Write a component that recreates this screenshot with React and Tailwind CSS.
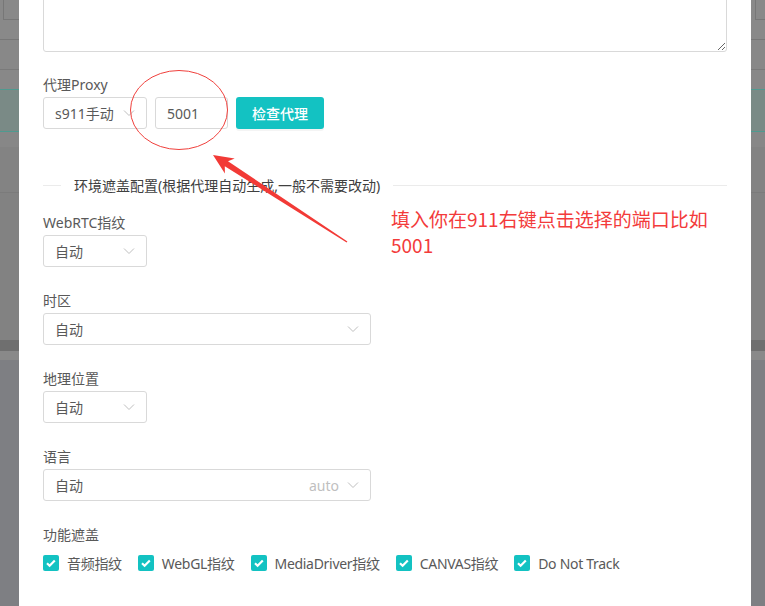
import React from 'react';

const font = { fontFamily: '"Noto Sans", "Noto Sans CJK SC", sans-serif' };

const Chevron = () => (
  <svg width="12" height="8" viewBox="0 0 12 8" className="shrink-0">
    <path d="M1 1.5l5 5 5-5" fill="none" stroke="#bfbfbf" strokeWidth="1" />
  </svg>
);

const Select = ({ value, width, hint }) => (
  <div
    className={`flex items-center h-[32px] border border-[#d9d9d9] rounded-[3px] bg-white pl-[11px] pr-[11px] text-[14px] text-[#595959] ${width}`}
  >
    <span className="flex-1 truncate">{value}</span>
    {hint && <span className="text-[#bfbfbf] mr-[8px]">{hint}</span>}
    <Chevron />
  </div>
);

const Field = ({ label, children, last }) => (
  <div className={last ? '' : 'mb-[23px]'}>
    <div className="h-[22px] leading-[22px] mb-[1px] text-[14px] text-[#595959]">{label}</div>
    {children}
  </div>
);

const Check = ({ label }) => (
  <label className="flex items-center mr-[8px]">
    <span className="w-[16px] h-[16px] rounded-[2px] bg-[#13c2c2] flex items-center justify-center">
      <svg width="16" height="16" viewBox="0 0 16 16">
        <path d="M4 8.2l2.6 2.5 5.2-5.2" fill="none" stroke="#fff" strokeWidth="2.2" />
      </svg>
    </span>
    <span className="px-[8px] text-[14px] text-[#595959] tracking-[-0.3px]">{label}</span>
  </label>
);

const Strip = ({ inset, width }) => (
  <div className={`flex flex-col h-full ${width}`}>
    <div className="h-[40px] bg-[#898989] border-b border-[#777]">
      <div className={`h-[20px] border-l border-b border-[#777] ${inset}`} />
    </div>
    <div className="h-[30px] bg-[#888] border-b border-[#7a7a7a]" />
    <div className="h-[19px] bg-[#888]" />
    <div className="h-[43px] bg-[#7a8a86] border-y border-[#4f9a90]" />
    <div className="h-[15px] bg-[#878787]" />
    <div className="h-[46px] bg-[#838383] border-b border-[#7b7b7b]" />
    <div className="h-[147px] bg-[#828282]" />
    <div className="h-[11px] bg-[#6f6f6f]" />
    <div className="h-[9px] bg-[#898989]" />
    <div className="flex-1 bg-[#7e7f83]" />
  </div>
);

const App = () => {
  const checks = ['音频指纹', 'WebGL指纹', 'MediaDriver指纹', 'CANVAS指纹', 'Do Not Track'];

  return (
    <div className="relative flex w-[765px] h-[606px] overflow-hidden" style={font}>
      <Strip width="w-[19px]" inset="ml-[3px]" />

      <div className="flex-1 bg-white overflow-hidden px-[24px]">
        <textarea className="block w-full h-[92px] -mt-[40px] border border-[#d9d9d9] rounded-[3px] outline-none" />

        <div className="mt-[22px]">
          <div className="h-[22px] leading-[22px] mb-[1px] text-[14px] text-[#595959]">代理Proxy</div>
          <div className="flex items-center gap-[8px]">
            <Select value="s911手动" width="w-[104px]" />
            <div className="w-[73px] h-[32px] border border-[#d9d9d9] rounded-[3px] px-[11px] flex items-center text-[14px] text-[#595959]">
              5001
            </div>
            <button className="w-[88px] h-[32px] rounded-[3px] bg-[#13c2c2] text-white text-[14px] font-medium shadow-[0_2px_0_rgba(0,0,0,0.045)]">
              检查代理
            </button>
          </div>
        </div>

        <div className="mt-[45px] flex items-center h-[22px]">
          <div className="w-[18px] border-t border-[#ebebeb]" />
          <span className="px-[13px] text-[14px] text-[#404040] whitespace-nowrap">
            环境遮盖配置(根据代理自动生成,一般不需要改动)
          </span>
          <div className="flex-1 border-t border-[#ebebeb]" />
        </div>

        <div className="mt-[16px]">
          <Field label="WebRTC指纹">
            <Select value="自动" width="w-[104px]" />
          </Field>
          <Field label="时区">
            <Select value="自动" width="w-[328px]" />
          </Field>
          <Field label="地理位置">
            <Select value="自动" width="w-[104px]" />
          </Field>
          <Field label="语言">
            <Select value="自动" width="w-[328px]" hint="auto" />
          </Field>
          <Field label="功能遮盖" last>
            <div className="flex items-center h-[34px] -mt-[1px]">
              {checks.map((c) => (
                <Check key={c} label={c} />
              ))}
            </div>
          </Field>
        </div>
      </div>

      <Strip width="w-[14px]" inset="ml-[4px]" />

      {/* annotation layer */}
      <svg className="absolute inset-0 pointer-events-none" width="765" height="606" viewBox="0 0 765 606">
        <ellipse cx="179" cy="110" rx="48.5" ry="39.5" fill="none" stroke="#f0403c" strokeWidth="1" />
        <polygon
          fill="#f23a36"
          points="213,155 234.7,158.4 228,161.2 347.4,241.4 346.6,242.6 224.8,166.2 224.9,173.4"
        />
      </svg>
      <div
        className="absolute left-[391px] top-[206px] text-[19px] leading-[26px] font-normal text-[#f33b3b]"
        style={{ fontFamily: '"Noto Sans CJK SC", sans-serif' }}
      >
        填入你在911右键点击选择的端口比如
        <br />
        5001
      </div>
    </div>
  );
};

export default App;
